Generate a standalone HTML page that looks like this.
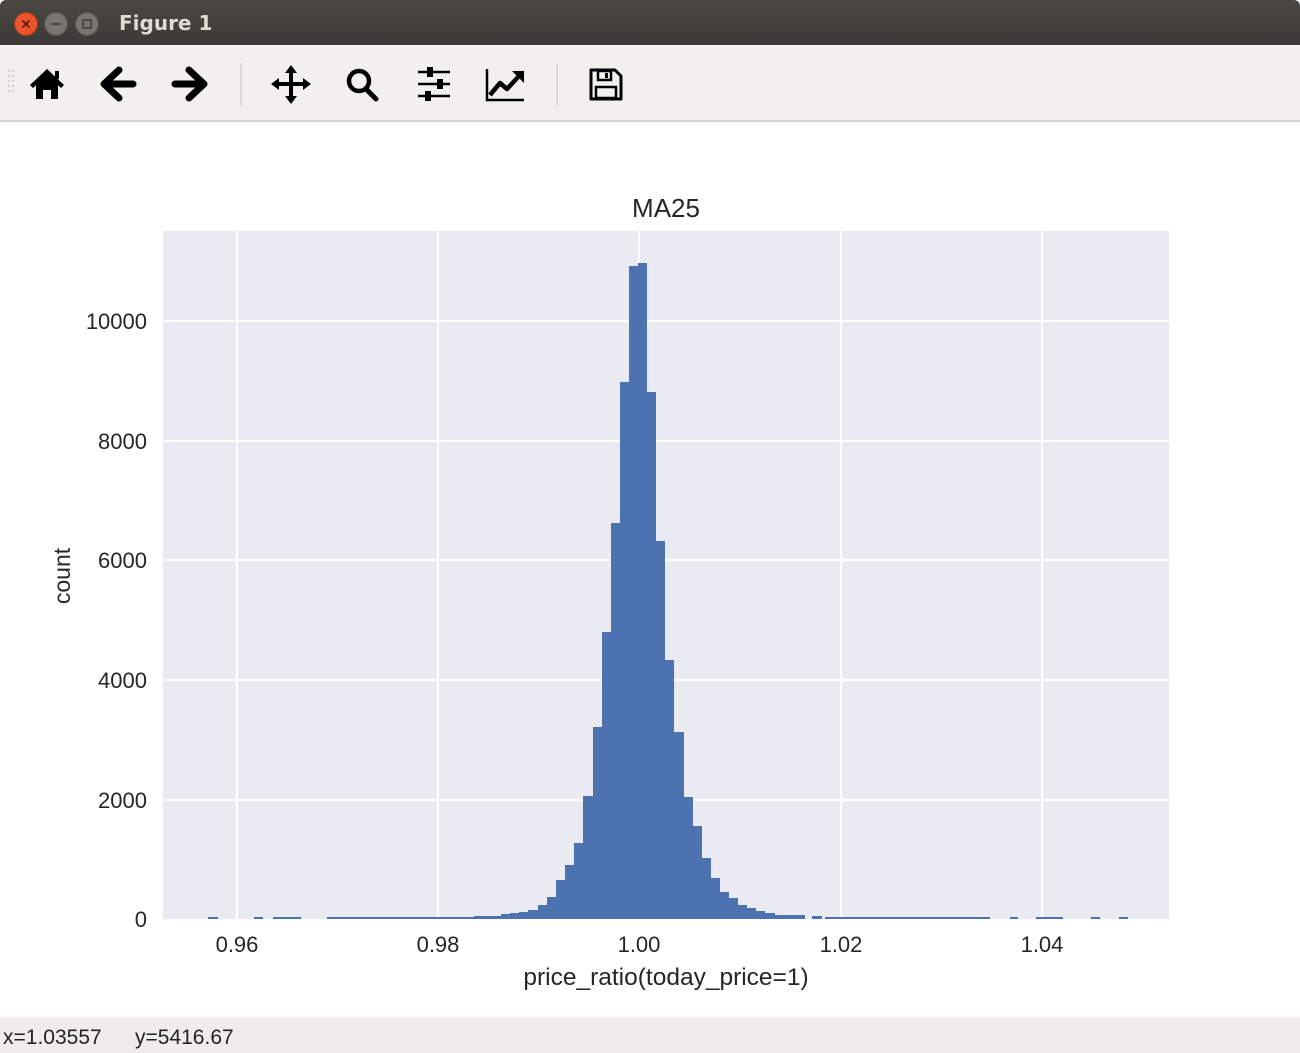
<!DOCTYPE html>
<html><head><meta charset="utf-8"><style>
html,body{margin:0;padding:0;width:1300px;height:1053px;overflow:hidden;background:#fff;font-family:"Liberation Sans",sans-serif}
#title{position:absolute;left:0;top:0;width:1300px;height:45px;background:linear-gradient(#4a4843,#3b3a36);border-radius:6px 6px 0 0}
#title .t{position:absolute;left:119px;top:11px;color:#dfdbd2;font-family:"DejaVu Sans",sans-serif;font-weight:bold;font-size:20px}
.btn{position:absolute;top:12px;width:22px;height:22px;border-radius:50%}
#tb{position:absolute;left:0;top:45px;width:1300px;height:75px;background:#f1f0ed;border-bottom:2px solid #d5d3ce}
#sb{position:absolute;left:0;top:1017px;width:1300px;height:36px;background:#efedea;font-size:21px;color:#222}
</style></head><body>
<div id="title">
<div class="btn" style="left:14px;background:#e9562d;border:1px solid #a03a1c"><svg width="22" height="22"><path d="M7.5 7.5l7 7M14.5 7.5l-7 7" stroke="#5a1d0c" stroke-width="1.6"/></svg></div>
<div class="btn" style="left:44px;background:#77756f;border:1px solid #55534f"><svg width="22" height="22"><path d="M6 11h10" stroke="#3b3a36" stroke-width="1.6"/></svg></div>
<div class="btn" style="left:75px;background:#77756f;border:1px solid #55534f"><svg width="22" height="22"><rect x="7" y="7" width="8" height="8" fill="none" stroke="#3b3a36" stroke-width="1.4"/></svg></div>
<div class="t">Figure 1</div>
</div>
<div id="tb">
<svg width="1300" height="75">
<g fill="#c8c6c0"><circle cx="9" cy="26" r="1"/><circle cx="9" cy="31" r="1"/><circle cx="9" cy="36" r="1"/><circle cx="9" cy="41" r="1"/><circle cx="9" cy="46" r="1"/><circle cx="13" cy="26" r="1"/><circle cx="13" cy="31" r="1"/><circle cx="13" cy="36" r="1"/><circle cx="13" cy="41" r="1"/><circle cx="13" cy="46" r="1"/></g>
<path d="M30 40L47 24L64 40L61 43L47 30L33 43Z" fill="#000"/><path d="M36 38L47 28L58 38V54H51V45H43V54H36Z" fill="#000"/><rect x="55" y="26" width="4" height="8" fill="#000"/>
<path d="M119 25L104 39L119 53" fill="none" stroke="#000" stroke-width="7" stroke-linejoin="round" stroke-linecap="round"/><path d="M106 39H133" stroke="#000" stroke-width="7" stroke-linecap="round"/>
<path d="M189 25L204 39L189 53" fill="none" stroke="#000" stroke-width="7" stroke-linejoin="round" stroke-linecap="round"/><path d="M175 39H202" stroke="#000" stroke-width="7" stroke-linecap="round"/>
<line x1="241" y1="18" x2="241" y2="61" stroke="#d3d1cc" stroke-width="1.5"/>
<path d="M291 24V55M275 39H307" stroke="#000" stroke-width="4"/>
<path d="M291 20L285 28H297Z M291 59L285 51H297Z M271 39L279 33V45Z M311 39L303 33V45Z" fill="#000"/>
<circle cx="359" cy="36" r="10" fill="none" stroke="#000" stroke-width="4.5"/><path d="M366 44L376 54" stroke="#000" stroke-width="5" stroke-linecap="round"/>
<path d="M418 27H450M418 39H450M418 51H450" stroke="#000" stroke-width="2.5"/>
<rect x="427" y="22" width="6" height="10" fill="#000"/><rect x="437" y="34" width="6" height="10" fill="#000"/><rect x="425" y="46" width="6" height="10" fill="#000"/>
<path d="M487 24V55H524" fill="none" stroke="#000" stroke-width="2.5"/>
<path d="M490 50L500 38L507 44L519 31" fill="none" stroke="#000" stroke-width="4.5" stroke-linejoin="round"/><path d="M512 26H524V38Z" fill="#000"/>
<line x1="557" y1="18" x2="557" y2="61" stroke="#d3d1cc" stroke-width="1.5"/>
<path d="M591 25H615L621 31V54H591Z" fill="none" stroke="#000" stroke-width="3" stroke-linejoin="round"/>
<rect x="598" y="26" width="13" height="9" fill="none" stroke="#000" stroke-width="2.5"/><rect x="605" y="28" width="3" height="5" fill="#000"/>
<rect x="596" y="42" width="20" height="11" fill="none" stroke="#000" stroke-width="2.5"/>
</svg>
</div>
<svg style="position:absolute;left:0;top:0" width="1300" height="1053">
<rect x="163" y="231" width="1006" height="688" fill="#eaeaf2"/>
<g stroke="#fff" stroke-width="2">
<line x1="237" y1="231" x2="237" y2="919"/><line x1="438" y1="231" x2="438" y2="919"/><line x1="639" y1="231" x2="639" y2="919"/><line x1="841" y1="231" x2="841" y2="919"/><line x1="1042" y1="231" x2="1042" y2="919"/>
<line x1="163" y1="321" x2="1169" y2="321"/><line x1="163" y1="441" x2="1169" y2="441"/><line x1="163" y1="560" x2="1169" y2="560"/><line x1="163" y1="680" x2="1169" y2="680"/><line x1="163" y1="800" x2="1169" y2="800"/>
</g>
<g fill="#4c72b0">
<rect x="208" y="917" width="10" height="2"/><rect x="254" y="917" width="9" height="2"/><rect x="273" y="917" width="28" height="2"/><rect x="327" y="917" width="150" height="2"/>
<rect x="825" y="917" width="165" height="2"/><rect x="1010" y="917" width="8" height="2"/><rect x="1036" y="917" width="27" height="2"/><rect x="1091" y="917" width="9" height="2"/><rect x="1119" y="917" width="9" height="2"/>
<rect x="474" y="916" width="27" height="3"/>
<rect x="501" y="914" width="9" height="5"/><rect x="510" y="913" width="9" height="6"/><rect x="519" y="912" width="9" height="7"/><rect x="528" y="910" width="10" height="9"/>
<rect x="538" y="905" width="9" height="14"/><rect x="547" y="897" width="9" height="22"/><rect x="556" y="880" width="9" height="39"/><rect x="565" y="865" width="9" height="54"/>
<rect x="574" y="843" width="9" height="76"/><rect x="583" y="796" width="10" height="123"/><rect x="593" y="727" width="9" height="192"/><rect x="602" y="632" width="9" height="287"/>
<rect x="611" y="523" width="9" height="396"/><rect x="620" y="382" width="9" height="537"/><rect x="629" y="266" width="9" height="653"/><rect x="638" y="263" width="9" height="656"/>
<rect x="647" y="392" width="9" height="527"/><rect x="656" y="541" width="9" height="378"/><rect x="665" y="660" width="9" height="259"/><rect x="674" y="732" width="10" height="187"/>
<rect x="684" y="797" width="9" height="122"/><rect x="693" y="826" width="9" height="93"/><rect x="702" y="858" width="9" height="61"/><rect x="711" y="878" width="9" height="41"/>
<rect x="720" y="892" width="9" height="27"/><rect x="729" y="898" width="9" height="21"/><rect x="738" y="905" width="9" height="14"/><rect x="747" y="908" width="9" height="11"/>
<rect x="756" y="911" width="9" height="8"/><rect x="765" y="913" width="10" height="6"/><rect x="775" y="915" width="30" height="4"/><rect x="812" y="916" width="10" height="3"/>
</g>
<g font-family="Liberation Sans,sans-serif" font-size="22" fill="#262626">
<text x="666" y="217" text-anchor="middle" font-size="26">MA25</text>
<g text-anchor="end"><text x="147" y="329">10000</text><text x="147" y="449">8000</text><text x="147" y="568">6000</text><text x="147" y="688">4000</text><text x="147" y="808">2000</text><text x="147" y="927">0</text></g>
<g text-anchor="middle"><text x="237" y="952">0.96</text><text x="438" y="952">0.98</text><text x="639" y="952">1.00</text><text x="841" y="952">1.02</text><text x="1042" y="952">1.04</text></g>
<text x="666" y="985" text-anchor="middle" font-size="24.5">price_ratio(today_price=1)</text>
<text transform="translate(70,576) rotate(-90)" text-anchor="middle" font-size="23">count</text>
</g>
</svg>
<div id="sb"><span style="position:absolute;left:3px;top:9px">x=1.03557</span><span style="position:absolute;left:135px;top:9px">y=5416.67</span></div>
</body></html>
